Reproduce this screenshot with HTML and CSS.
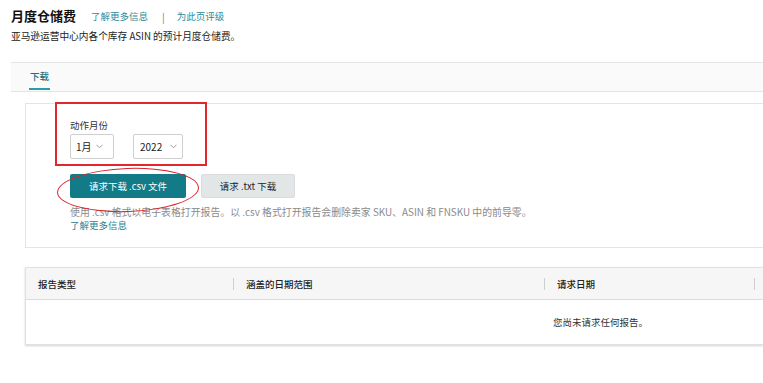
FILE: index.html
```html
<!DOCTYPE html>
<html lang="zh-CN">
<head>
<meta charset="utf-8">
<title>月度仓储费</title>
<link rel="stylesheet" href="styles.css">
</head>
<body>
<div class="page">
  <div class="head">
    <div class="title-row">
      <h1 class="title">月度仓储费</h1>
      <a class="link">了解更多信息</a>
      <span class="sep">|</span>
      <a class="link">为此页评级</a>
    </div>
    <p class="subtitle">亚马逊运营中心内各个库存 ASIN 的预计月度仓储费。</p>
  </div>

  <div class="tabs">
    <span class="tab active">下载</span>
  </div>

  <div class="card">
    <div class="label">动作月份</div>
    <div class="selects">
      <div class="select s-month"><span>1月</span><svg class="chev" width="7" height="5" viewBox="0 0 7 5"><path d="M0.5 0.8 L3.5 3.8 L6.5 0.8" fill="none" stroke="#9a9a9a" stroke-width="1"/></svg></div>
      <div class="select s-year"><span>2022</span><svg class="chev" width="7" height="5" viewBox="0 0 7 5"><path d="M0.5 0.8 L3.5 3.8 L6.5 0.8" fill="none" stroke="#9a9a9a" stroke-width="1"/></svg></div>
    </div>
    <div class="buttons">
      <button class="btn primary">请求下载 .csv 文件</button>
      <button class="btn secondary">请求 .txt 下载</button>
    </div>
    <p class="help">使用 .csv 格式以电子表格打开报告。以 .csv 格式打开报告会删除卖家 SKU、ASIN 和 FNSKU 中的前导零。</p>
    <a class="link more">了解更多信息</a>
  </div>

  <div class="table">
    <div class="thead">
      <div class="th">报告类型</div>
      <div class="th div">涵盖的日期范围</div>
      <div class="th div">请求日期</div>
      <div class="th div"></div>
    </div>
    <div class="tbody">
      <div class="empty">您尚未请求任何报告。</div>
    </div>
  </div>

  <div class="anno-rect"></div>
  <div class="anno-ellipse"></div>
</div>
</body>
</html>
```

FILE: styles.css
```css
html, body {
  margin: 0;
  padding: 0;
  overflow: hidden;
  background: #ffffff;
}
body {
  font-family: "Noto Sans CJK SC", "Noto Sans", "Liberation Sans", sans-serif;
  color: #333;
  font-size: 10px;
}
.page {
  position: relative;
  width: 763px;
  height: 383px;
  overflow: hidden;
}
.head {
  padding: 6px 0 0 11px;
}
.title-row {
  display: flex;
  align-items: center;
  height: 20px;
}
.title {
  margin: 0 15px 0 0;
  font-size: 13px;
  font-weight: 700;
  color: #111;
  line-height: 20px;
}
.link {
  color: #2b8a98;
  font-size: 9.5px;
  text-decoration: none;
}
.sep {
  color: #777;
  margin: 0 12px 0 14px;
  font-size: 10px;
}
.subtitle {
  margin: 3px 0 0 0;
  font-size: 9.7px;
  color: #222;
  line-height: 14px;
}
.tabs {
  margin: 19px 0 0 11px;
  height: 28px;
  background: #fafafa;
  border-top: 1px solid #e6e6e6;
  border-bottom: 1px solid #e3e3e3;
  display: flex;
  align-items: stretch;
  padding-left: 19px;
}
.tab {
  display: flex;
  align-items: center;
  font-size: 9.5px;
  color: #1c6f7b;
  font-weight: 500;
  position: relative;
  padding-bottom: 3px;
}
.tab.active::after {
  content: "";
  position: absolute;
  left: -1px;
  right: -1px;
  bottom: 1px;
  height: 2px;
  background: #2d9aa7;
}
.card {
  margin: 11px 0 0 25px;
  height: 145px;
  box-sizing: border-box;
  border: 1px solid #e4e4e4;
  border-right: none;
  padding: 14px 0 0 44px;
}
.label {
  font-size: 9.5px;
  color: #333;
  line-height: 14px;
}
.selects {
  display: flex;
  gap: 19px;
  margin-top: 2px;
}
.select {
  height: 25px;
  box-sizing: border-box;
  border: 1px solid #cfcfcf;
  border-radius: 2px;
  background: #fff;
  display: flex;
  align-items: center;
  justify-content: space-between;
  font-size: 10px;
  color: #222;
}
.s-month { width: 44px; padding: 0 10px 0 5px; }
.s-year { width: 50px; padding: 0 5px 0 6px; }
.buttons {
  display: flex;
  gap: 15px;
  margin-top: 15px;
}
.btn {
  height: 24px;
  border: none;
  border-radius: 2px;
  font-family: inherit;
  font-size: 9.5px;
  padding: 0;
}
.primary {
  width: 116px;
  background: #137b88;
  color: #fff;
}
.secondary {
  width: 94px;
  background: #e2e6e6;
  color: #222;
  border: 1px solid #d9dddd;
}
.help {
  margin: 8px 0 0 0;
  font-size: 9.9px;
  color: #8a8a8a;
  line-height: 13px;
}
.more {
  display: block;
  line-height: 13px;
  color: #1f7f8c;
}
.table {
  margin: 19px 0 0 25px;
  border: 1px solid #e2e2e2;
  border-right: none;
  box-shadow: 0 1px 2px rgba(0,0,0,0.18);
}
.thead {
  display: grid;
  grid-template-columns: 207px 311px 210px 1fr;
  height: 31px;
  background: #f6f6f6;
  border-bottom: 1px solid #dcdcdc;
  align-items: center;
}
.th {
  padding-left: 12px;
  font-size: 9.5px;
  font-weight: 500;
  color: #222;
  position: relative;
}
.th.div {
  padding-left: 13px;
}
.th.div::before {
  content: "";
  position: absolute;
  left: 0;
  top: 50%;
  margin-top: -6px;
  width: 1px;
  height: 12px;
  background: #cfcfcf;
}
.th:empty {
  height: 14px;
}
.tbody {
  height: 44px;
  display: flex;
  align-items: center;
  padding-left: 527px;
}
.empty {
  font-size: 9.5px;
  color: #333;
}
.anno-rect {
  position: absolute;
  left: 55px;
  top: 102px;
  width: 152px;
  height: 64px;
  box-sizing: border-box;
  border: 2px solid #e3262d;
}
.anno-ellipse {
  position: absolute;
  left: 57px;
  top: 168px;
  width: 142px;
  height: 44px;
  box-sizing: border-box;
  border: 1.5px solid #d8232a;
  border-radius: 50%;
  transform: rotate(-2deg);
}
```
